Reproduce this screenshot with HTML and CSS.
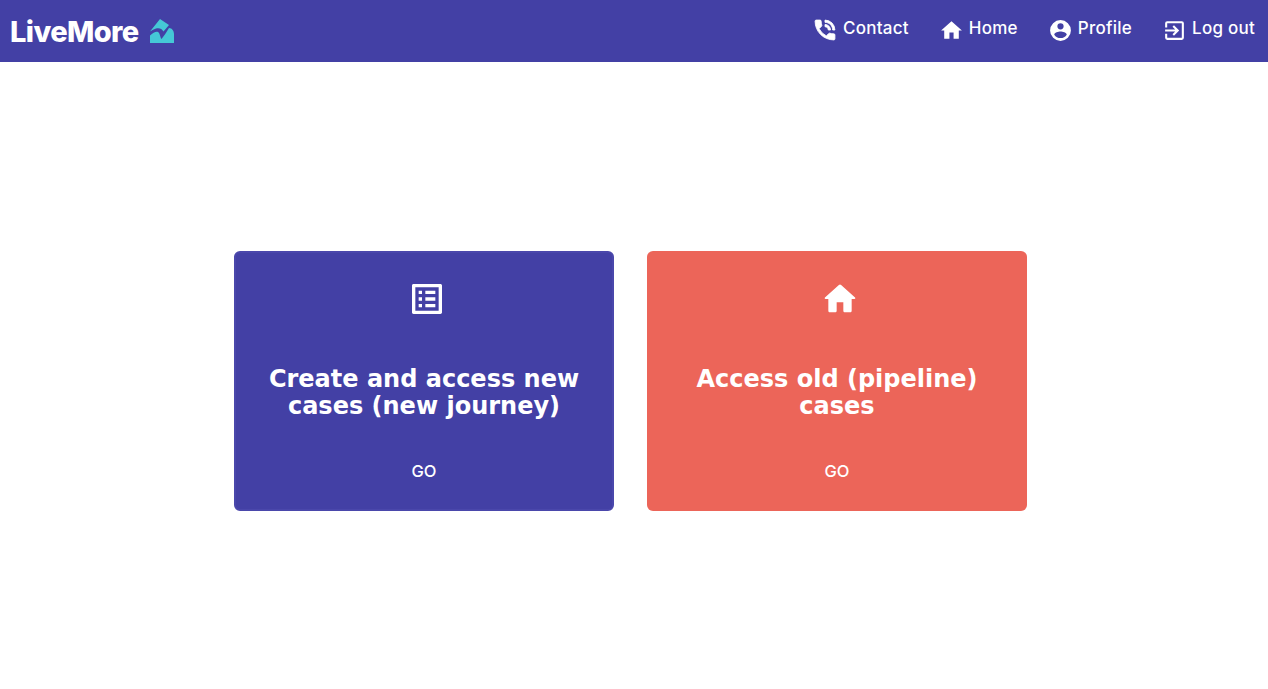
FILE: index.html
```html
<!DOCTYPE html>
<html>
    <head>
        <title>LiveMore</title>
        <link rel="stylesheet" href="styles.css">
    </head>
    <body>
        <nav class="navbar">
            <a class="logo" href="#">
                <span class="logo-text">LiveMore</span>
                <svg class="logo-mark" viewBox="0 0 24 24" width="24" height="24">
                    <path fill="#45c8d6" d="M0 12.500 L10 0 L19 6 L13.500 12.500 C12 9.500 9 8.500 6 9.500 C4 10 2 11 0 12.500Z"/>
                    <path fill="#45c8d6" d="M0 24 L0 16.500 C3 14 6 12 8 13 C10 14 10 18 11.500 20 C14 17 16.500 13 19 9 C22 9 24 12 24 15 L24 24Z"/>
                </svg>
            </a>
            <div class="nav-links">
                <a class="nav-link" href="#">
                    <svg class="nav-icon nav-icon-phone" viewBox="2 2 20 20"><path d="M20 15.500c-1.250 0-2.450-.2-3.570-.57a1 1 0 0 0-1.020.24l-2.200 2.200a15.070 15.070 0 0 1-6.590-6.580l2.200-2.210a.96.96 0 0 0 .25-1A11.360 11.360 0 0 1 8.500 4a1 1 0 0 0-1-1H4a1 1 0 0 0-1 1 17 17 0 0 0 17 17 1 1 0 0 0 1-1v-3.500a1 1 0 0 0-1-1zM19 12h2a9 9 0 0 0-9-9v2c3.870 0 7 3.130 7 7zm-4 0h2c0-2.760-2.240-5-5-5v2c1.660 0 3 1.340 3 3z"/></svg>
                    <span class="nav-label">Contact</span>
                </a>
                <a class="nav-link" href="#">
                    <svg class="nav-icon" viewBox="0 0 24 24"><path d="M10 20v-6h4v6h5v-8h3L12 3 2 12h3v8z"/></svg>
                    <span class="nav-label">Home</span>
                </a>
                <a class="nav-link" href="#">
                    <svg class="nav-icon" viewBox="0 0 24 24"><path d="M12 2a10 10 0 1 0 0 20 10 10 0 0 0 0-20zm0 3a3 3 0 1 1 0 6 3 3 0 0 1 0-6zm0 14.200a7.200 7.200 0 0 1-6-3.220c.03-1.990 4-3.080 6-3.080s5.970 1.090 6 3.080a7.200 7.200 0 0 1-6 3.220z"/></svg>
                    <span class="nav-label">Profile</span>
                </a>
                <a class="nav-link" href="#">
                    <svg class="nav-icon" viewBox="0 0 24 24"><path d="M10.090 15.590 11.500 17l5-5-5-5-1.410 1.410L12.670 11H3v2h9.670l-2.580 2.590zM19 3H5a2 2 0 0 0-2 2v4h2V5h14v14H5v-4H3v4a2 2 0 0 0 2 2h14a2 2 0 0 0 2-2V5a2 2 0 0 0-2-2z"/></svg>
                    <span class="nav-label">Log out</span>
                </a>
            </div>
        </nav>

        <main class="cards">
            <a class="card card-new" href="#">
                <svg class="card-icon" viewBox="0 0 24 24"><path d="M19 5v14H5V5h14m1.100-2H3.900c-.5 0-.9.4-.9.9v16.200c0 .4.4.9.9.9h16.200c.4 0 .9-.5.9-.9V3.900c0-.5-.5-.9-.9-.9zM11 7h6v2h-6V7zm0 4h6v2h-6v-2zm0 4h6v2h-6v-2zM7 7h2v2H7V7zm0 4h2v2H7v-2zm0 4h2v2H7v-2z"/></svg>
                <h2 class="card-title">Create and access new cases (new journey)</h2>
                <span class="card-action">GO</span>
            </a>
            <a class="card card-old" href="#">
                <svg class="card-icon" viewBox="0 0 24 24"><path d="M10 19v-5h4v5c0 .55.45 1 1 1h3c.55 0 1-.45 1-1v-7h1.700c.46 0 .68-.57.33-.87L12.670 3.600a1 1 0 0 0-1.340 0l-8.360 7.530c-.34.300-.13.870.33.870H5v7c0 .55.45 1 1 1h3c.55 0 1-.45 1-1z"/></svg>
                <h2 class="card-title">Access old (pipeline) cases</h2>
                <span class="card-action">GO</span>
            </a>
        </main>
    </body>
</html>
```

FILE: styles.css
```css
body{
    font-family: Inter, "Liberation Sans", sans-serif;
    margin: 0;
    padding: 0;
    background: #fff;
    color: #fff;
}
a{
    color: #fff;
    text-decoration: none;
}

.navbar{
    height: 62px;
    background: #4340a5;
    display: flex;
    justify-content: space-between;
    align-items: center;
    padding: 0 13px 0 10px;
}
.logo{
    display: flex;
    align-items: center;
    gap: 11px;
}
.logo-text{
    font-size: 29px;
    font-weight: 800;
    letter-spacing: -0.6px;
}
.logo-mark{
    display: block;
}
.nav-links{
    display: flex;
    align-items: center;
    gap: 30px;
    margin-bottom: 2px;
}
.nav-link{
    display: flex;
    align-items: center;
    gap: 5px;
    font-size: 17px;
    font-weight: 500;
    letter-spacing: 0.25px;
}
.nav-label{
    padding-bottom: 4px;
}
.nav-icon{
    width: 25px;
    height: 25px;
    fill: #fff;
}
.nav-icon-phone{
    width: 22px;
    height: 22px;
    margin-right: 2px;
    stroke: #fff;
    stroke-width: 0.8;
}

.cards{
    display: flex;
    justify-content: center;
    gap: 33px;
    padding: 189px 7px 0 0;
}
.card{
    width: 380px;
    height: 260px;
    box-sizing: border-box;
    border-radius: 6px;
    padding: 28px 20px 0;
    display: flex;
    flex-direction: column;
    align-items: center;
    text-align: center;
}
.card-new{
    background: #4340a5;
    border: 2px solid #4a47ab;
    padding-top: 26px;
}
.card-old{
    background: #ec6559;
}
.card-icon{
    width: 40px;
    height: 40px;
    margin-left: 5px;
    fill: #fff;
}
.card-title{
    font-family: "DejaVu Sans", Verdana, sans-serif;
    font-size: 24px;
    font-weight: 700;
    line-height: 27px;
    margin: 47px 0 0;
}
.card-action{
    font-size: 16.500px;
    font-weight: 500;
    margin-top: 41px;
}
```
